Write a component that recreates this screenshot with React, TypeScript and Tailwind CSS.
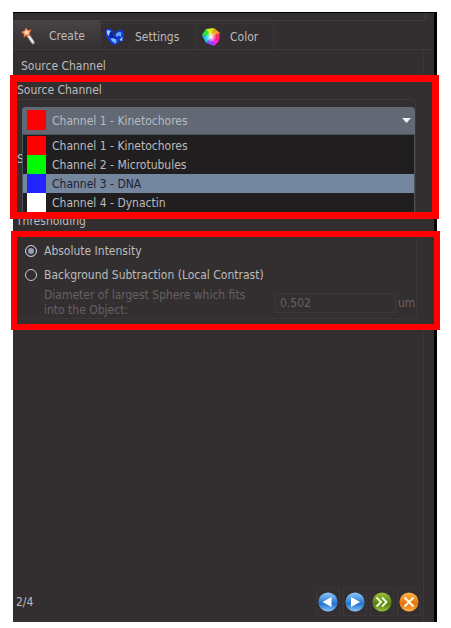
import { useState } from "react";

type Channel = { name: string; swatch: string };

const channels: Channel[] = [
  { name: "Channel 1 - Kinetochores", swatch: "bg-[#ff0000]" },
  { name: "Channel 2 - Microtubules", swatch: "bg-[#00fb00]" },
  { name: "Channel 3 - DNA", swatch: "bg-[#2424ff]" },
  { name: "Channel 4 - Dynactin", swatch: "bg-white" },
];

function WandIcon() {
  return (
    <svg width="18" height="18" viewBox="0 0 18 18" aria-hidden="true">
      <path d="M7 8 L12 15.5" stroke="#a9a3a6" strokeWidth="3.4" strokeLinecap="round" />
      <path d="M7 8 L11.8 15" stroke="#f2ecea" strokeWidth="1.8" strokeLinecap="round" />
      <path d="M5 0.5 L6.6 3 L10.5 2.6 L9 6 L9.4 9.4 L6 8.6 L3 10.4 L2.6 7.2 L0 5 L3.4 3.6 Z" fill="#ea7038" />
      <path d="M5.2 2 L6.4 4 L8.6 4.2 L7.4 6 L7.4 7.8 L5.2 7.2 L3.6 8.2 L3.8 6.2 L2.2 5 L4.4 4.2 Z" fill="#ffdcb0" />
    </svg>
  );
}

function SettingsIcon() {
  return (
    <svg width="20" height="18" viewBox="0 0 20 18" aria-hidden="true">
      <path d="M1.5 1 Q-0.5 5 1.5 9 Q5 16 10.5 17 Q14 15.5 14 12 Q16 15 18.5 12.5 Q20 7 18 3 Q15 1 11.5 3 L10.5 7 Q7.5 7 8.5 3 Q5 -0.5 1.5 1Z" fill="#1638cc" />
      <path d="M4 4 Q8 3 8 8 Q9 10 12 10 L11 13 Q6 12 4 8Z" fill="#10209c" />
      <path d="M2 2 Q1 6 4 8 Q4 5 6 3Z" fill="#8fd3ff" />
      <path d="M5.5 10.5 Q7 14.5 11 15.5 L11.5 11.5 L8 10Z" fill="#6cbcff" />
      <path d="M10.5 6.5 Q13.5 3 16.5 4.5 L16 9 Q14 6.5 12 9Z" fill="#5aa8ff" />
      <path d="M14.5 12 L17.5 8.5 L17 13Z" fill="#9cdcff" />
    </svg>
  );
}

function ColorIcon() {
  return (
    <svg width="18" height="18" viewBox="0 0 18 18" aria-hidden="true">
      <defs>
        <radialGradient id="hexGlow">
          <stop offset="0" stopColor="#fff" />
          <stop offset="0.9" stopColor="#fff" stopOpacity="0" />
        </radialGradient>
      </defs>
      <path d="M9 9 L0 7 L4 1Z" fill="#25e83a" />
      <path d="M9 9 L4 1 L12 0Z" fill="#c8f51e" />
      <path d="M9 9 L12 0 L18 5Z" fill="#ff9b20" />
      <path d="M9 9 L18 5 L17 13Z" fill="#ff2470" />
      <path d="M9 9 L17 13 L12 18Z" fill="#ff22d8" />
      <path d="M9 9 L12 18 L4 15Z" fill="#8b4cff" />
      <path d="M9 9 L4 15 L0 7Z" fill="#20c8f5" />
      <circle cx="9" cy="9" r="6" fill="url(#hexGlow)" />
    </svg>
  );
}

type Kind = "back" | "next" | "skip" | "cancel";

function RoundIcon({ kind }: { kind: Kind }) {
  const tone = {
    back: ["#8cc8fa", "#2474cc"],
    next: ["#8cc8fa", "#2474cc"],
    skip: ["#9cc43c", "#557f10"],
    cancel: ["#ffb64a", "#e4720f"],
  }[kind];
  return (
    <svg width="20" height="20" viewBox="0 0 20 20" aria-hidden="true">
      <defs>
        <linearGradient id={`tone-${kind}`} x1="0" y1="0" x2="0" y2="1">
          <stop offset="0" stopColor={tone[0]} />
          <stop offset="0.6" stopColor={tone[1]} />
          <stop offset="1" stopColor={tone[0]} />
        </linearGradient>
      </defs>
      <circle cx="10" cy="10" r="9.6" fill={`url(#tone-${kind})`} />
      {kind === "back" && <path d="M13.5 5 V15 L4.5 10Z" fill="#fff" />}
      {kind === "next" && <path d="M6 5 V15 L15 10Z" fill="#fff" />}
      {kind === "skip" && (
        <path d="M4.5 5.5 L9 10 L4.5 14.5 M10 5.5 L14.5 10 L10 14.5" fill="none" stroke="#f4fadc" strokeWidth="2" />
      )}
      {kind === "cancel" && <path d="M5.5 5.5 L14.5 14.5 M14.5 5.5 L5.5 14.5" stroke="#fff3dc" strokeWidth="2.2" />}
    </svg>
  );
}

const actions: { kind: Kind; label: string }[] = [
  { kind: "back", label: "Back" },
  { kind: "next", label: "Next" },
  { kind: "skip", label: "Finish" },
  { kind: "cancel", label: "Cancel" },
];

export default function App() {
  const [channel, setChannel] = useState(channels[0].name);
  const [mode, setMode] = useState("absolute");
  const current = channels.find((c) => c.name === channel) ?? channels[0];

  return (
    <div className="min-h-screen bg-white pt-3 pr-3.5 pb-1.5 pl-[13px] font-['DejaVu_Sans_Condensed','DejaVu_Sans',sans-serif] text-xs leading-4 text-[#bdbbbc]">
      <main className="flex min-h-[610px] flex-col border-t border-r-[3px] border-black bg-[#332f30]">
        <div className="mr-2 h-2 rounded-br border-r border-b border-[#413d3e]" />

        <nav role="tablist" className="flex h-[29px] items-end border-b border-[#3e3a3b]">
          <button role="tab" aria-selected="true" className="flex h-[29px] w-[88px] items-center gap-2.5 rounded-tr bg-linear-to-b from-[#484445] to-[#343031] pt-0.5 pl-2">
            <WandIcon />
            Create
          </button>
          <button role="tab" aria-selected="false" className="flex h-[26px] w-[95px] items-center gap-2.5 border-t border-r border-[#3b3738] pl-1">
            <SettingsIcon />
            Settings
          </button>
          <button role="tab" aria-selected="false" className="flex h-[26px] w-[78px] items-center gap-2.5 border-t border-r border-[#3b3738] pl-1.5">
            <ColorIcon />
            Color
          </button>
        </nav>

        <h1 className="mr-2.5 h-[25px] border-r border-[#3b3738] pt-2 pl-2">Source Channel</h1>

        <section className="relative z-10 -mr-[5px] -ml-[3px] h-36 border-[7px] border-[#ff0000]">
          <label htmlFor="channel" className="block h-[17px]">
            Source Channel
          </label>
          <div className="mr-4 flex h-[113px] rounded-tr border-t border-r border-[#3d393a]">
            <span className="w-[5px] shrink-0 pt-[51px]">S</span>
            <div className="relative flex-1 pt-[7px]">
              <div className="relative flex h-[27px] items-center rounded-t-sm bg-[#626975] pl-[5px]">
                <span className={`-mt-0.5 h-5 w-[19px] ${current.swatch}`} />
                <select
                  id="channel"
                  value={channel}
                  onChange={(e) => setChannel(e.target.value)}
                  className="h-full min-w-0 flex-1 appearance-none pl-1.5 text-[#b9bbc0] outline-none"
                >
                  {channels.map((c) => (
                    <option key={c.name}>{c.name}</option>
                  ))}
                </select>
                <svg className="pointer-events-none mr-1" width="9" height="5" viewBox="0 0 9 5" aria-hidden="true">
                  <path d="M0 0 H9 L4.5 5Z" fill="#f2f2f5" />
                </svg>
              </div>
              <ul role="listbox" aria-label="Source Channel" className="h-[78px] border-t border-r border-l border-[#4a5158] bg-[#211e1f] pt-px">
                {channels.map((c, i) => (
                  <li key={c.name} role="option" aria-selected={i === 2}>
                    <button
                      onClick={() => setChannel(c.name)}
                      className={`flex h-[19px] w-full items-center gap-1.5 pl-1 text-left ${i === 2 ? "bg-[#75869f] text-[#1b2333]" : ""}`}
                    >
                      <span className={`h-full w-[19px] ${c.swatch}`} />
                      {c.name}
                    </button>
                  </li>
                ))}
              </ul>
            </div>
          </div>
        </section>

        <h2 className="-mt-1.5 h-[18px] pl-[3px]">Thresholding</h2>

        <fieldset className="-mr-1.5 -ml-0.5 h-[99px] min-w-0 border-[6px] border-[#ff0000]" aria-label="Thresholding">
          <div className="mr-[17px] h-[82px] rounded-br border-r border-b border-[#3b3738] pt-1.5 pl-2">
            <label className="flex h-4 items-center gap-[7px]">
              <input
                type="radio"
                name="mode"
                checked={mode === "absolute"}
                onChange={() => setMode("absolute")}
                className="size-3 appearance-none rounded-full border border-[#c9c9cb] checked:bg-[#91a1b8] checked:shadow-[inset_0_0_0_2px_#332f30]"
              />
              Absolute Intensity
            </label>
            <label className="mt-2 flex h-4 items-center gap-[7px]">
              <input
                type="radio"
                name="mode"
                checked={mode === "background"}
                onChange={() => setMode("background")}
                className="size-3 appearance-none rounded-full border border-[#c9c9cb] checked:bg-[#91a1b8] checked:shadow-[inset_0_0_0_2px_#332f30]"
              />
              Background Subtraction (Local Contrast)
            </label>
            <div className="mt-[5px] flex items-center pl-[19px] text-[#656162]">
              <label htmlFor="diameter" className="w-[231px] shrink-0 leading-[15px]">
                Diameter of largest Sphere which fits
                <br />
                into the Object:
              </label>
              <input
                id="diameter"
                disabled
                defaultValue="0.502"
                className="h-5 min-w-0 flex-1 rounded-xs border border-[#3d393a] px-1"
              />
              <span className="w-5 pl-0.5">um</span>
            </div>
          </div>
        </fieldset>

        <div className="mr-2.5 flex-1 border-r border-[#3b3738]" />

        <footer className="mr-2.5 flex items-center border-r border-[#3b3738] pr-0.5 pb-1.5 pl-[3px]">
          <span className="flex-1">2/4</span>
          <div className="flex gap-[3px]">
            {actions.map((a) => (
              <button key={a.kind} aria-label={a.label} className="flex h-7 w-6 items-center justify-center border border-[#3b3738]">
                <RoundIcon kind={a.kind} />
              </button>
            ))}
          </div>
        </footer>
      </main>
    </div>
  );
}
